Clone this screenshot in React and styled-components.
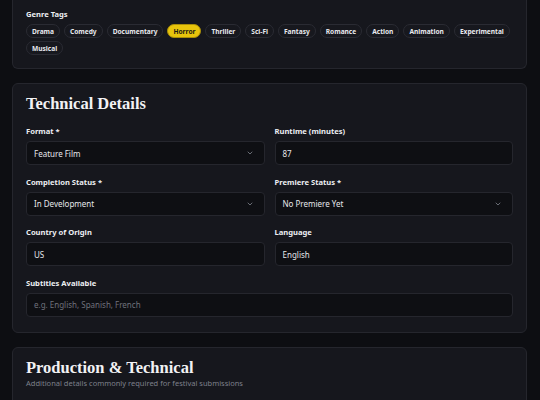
import React from "react";
import styled, { createGlobalStyle } from "styled-components";

const Global = createGlobalStyle`
  html, body { margin: 0; padding: 0; background: #0d0e12; }
  body { font-family: "Noto Sans", "Open Sans", sans-serif; color: #e6e7eb; }
  * { box-sizing: border-box; }
`;

const Page = styled.div`
  width: 540px;
  height: 400px;
  overflow: hidden;
  padding: 0 13px 0 12px;
  display: flex;
  flex-direction: column;
  gap: 14px;
`;

const Card = styled.section`
  background: #16171d;
  border: 1px solid #25262d;
  border-radius: 6px;
  padding: ${(p) => p.$pad || "10px 13px 15px"};
  ${(p) => p.$top ? "border-top-left-radius:0;border-top-right-radius:0;border-top:none;margin-top:-4px;" : ""}
`;

const SectionTitle = styled.h2`
  margin: 0;
  font-family: "Liberation Serif", "Times New Roman", serif;
  font-weight: 700;
  font-size: 16.5px;
  line-height: 20px;
  color: #f2f2f4;
`;

const Subtitle = styled.p`
  margin: 0;
  font-size: 7.5px;
  color: #7d808b;
`;

const Label = styled.label`
  display: block;
  font-size: 7.6px;
  font-weight: 700;
  line-height: 10px;
  color: #eceef2;
  margin-bottom: 5px;
`;

const TagWrap = styled.div`
  display: flex;
  flex-wrap: wrap;
  gap: 3px 4px;
`;

const Tag = styled.span`
  display: inline-flex;
  align-items: center;
  height: 14px;
  padding: 0 5px;
  border-radius: 999px;
  font-size: 6.6px;
  font-weight: 700;
  background: ${(p) => (p.$active ? "#e8c40c" : "#17181e")};
  color: ${(p) => (p.$active ? "#1b1a12" : "#e8e9ee")};
  border: 1px solid ${(p) => (p.$active ? "#a88d08" : "#2a2b33")};
`;

const Grid = styled.div`
  display: grid;
  grid-template-columns: 1fr 1fr;
  column-gap: 10px;
  row-gap: 11.5px;
  margin-top: 12px;
`;

const Field = styled.div`
  grid-column: ${(p) => (p.$full ? "1 / span 2" : "auto")};
`;

const Control = styled.div`
  height: 24px;
  border: 1px solid #25262d;
  border-radius: 4px;
  background: #0e0f13;
  display: flex;
  align-items: center;
  justify-content: space-between;
  padding: 0 10px 0 7px;
  font-size: 8px;
  color: ${(p) => (p.$placeholder ? "#6e717b" : "#e6e7eb")};
`;

const Chevron = () => (
  <svg width="8" height="8" viewBox="0 0 24 24" fill="none" stroke="#8b8e98" strokeWidth="2.2" strokeLinecap="round" strokeLinejoin="round">
    <path d="m6 9 6 6 6-6" />
  </svg>
);

const tags = ["Drama", "Comedy", "Documentary", "Horror", "Thriller", "Sci-Fi", "Fantasy", "Romance", "Action", "Animation", "Experimental", "Musical"];

const Select = ({ value }) => (
  <Control>
    <span>{value}</span>
    <Chevron />
  </Control>
);

export default function App() {
  return (
    <>
      <Global />
      <Page>
        <Card $top $pad="13px 13px 13px">
          <Label>Genre Tags</Label>
          <TagWrap>
            {tags.map((t) => (
              <Tag key={t} $active={t === "Horror"}>{t}</Tag>
            ))}
          </TagWrap>
        </Card>
        <Card>
          <SectionTitle>Technical Details</SectionTitle>
          <Grid>
            <Field>
              <Label>Format *</Label>
              <Select value="Feature Film" />
            </Field>
            <Field>
              <Label>Runtime (minutes)</Label>
              <Control>87</Control>
            </Field>
            <Field>
              <Label>Completion Status *</Label>
              <Select value="In Development" />
            </Field>
            <Field>
              <Label>Premiere Status *</Label>
              <Select value="No Premiere Yet" />
            </Field>
            <Field>
              <Label>Country of Origin</Label>
              <Control>US</Control>
            </Field>
            <Field>
              <Label>Language</Label>
              <Control>English</Control>
            </Field>
            <Field $full>
              <Label>Subtitles Available</Label>
              <Control $placeholder>e.g. English, Spanish, French</Control>
            </Field>
          </Grid>
        </Card>
        <Card $pad="10px 13px 40px">
          <SectionTitle>Production &amp; Technical</SectionTitle>
          <Subtitle>Additional details commonly required for festival submissions</Subtitle>
        </Card>
      </Page>
    </>
  );
}
